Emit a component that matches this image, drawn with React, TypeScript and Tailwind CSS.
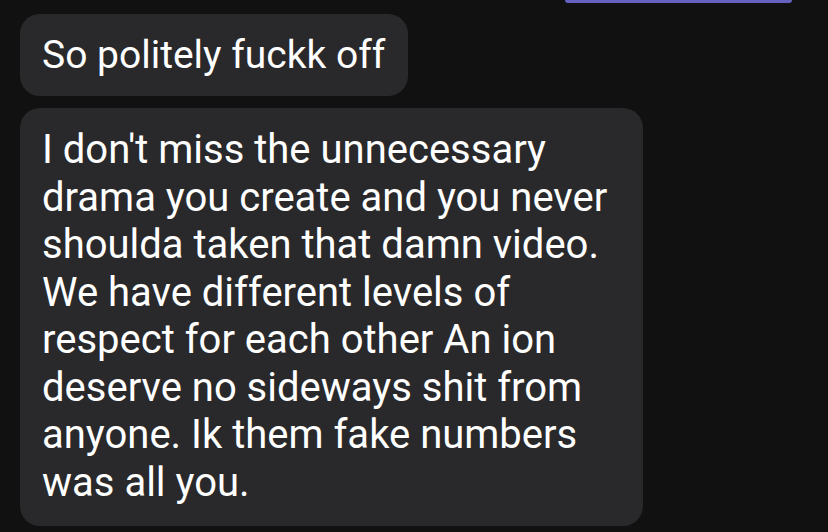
export default function App() {
    const lines = [
        "I don't miss the unnecessary",
        "drama you create and you never",
        "shoulda taken that damn video.",
        "We have different levels of",
        "respect for each other An ion",
        "deserve no sideways shit from",
        "anyone. Ik them fake numbers",
        "was all you.",
    ]

    return (
        <div className="w-[828px] h-[532px] overflow-hidden bg-[#111111] font-['Roboto',sans-serif] text-white">
            <div className="flex justify-end pr-[36px]">
                <div className="h-[3px] w-[227px] rounded-b-full bg-[#6762c2]"></div>
            </div>

            <div className="px-[20px] pt-[11px] flex flex-col items-start gap-[12px]">
                <div className="rounded-[20px] bg-[#29292b] pl-[22px] pr-[23px] py-[17px] text-[39px] leading-[48px]">
                    So politely fuckk off
                </div>

                <div className="w-[623px] rounded-[20px] bg-[#29292b] px-[22px] pt-[18px] pb-[20px] text-[40px] leading-[47.5px]">
                    {lines.map((line, idx) => (
                        <div key={idx} className="whitespace-nowrap">{line}</div>
                    ))}
                </div>
            </div>
        </div>
    )
}
